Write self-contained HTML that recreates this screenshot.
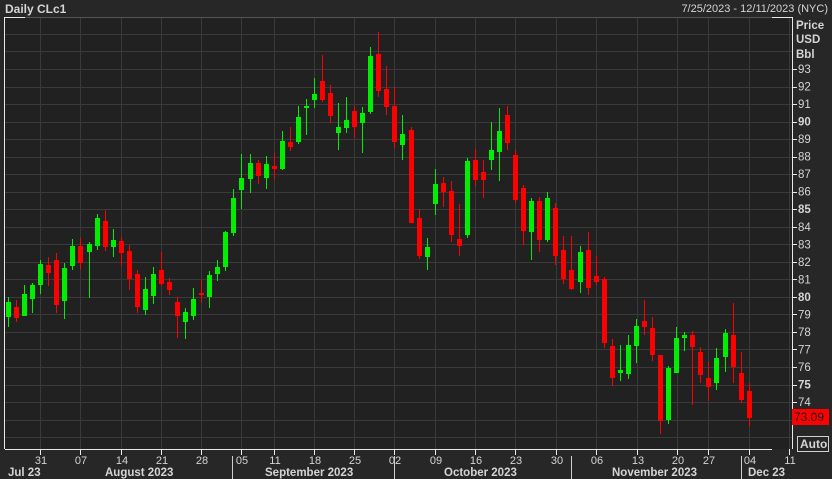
<!DOCTYPE html>
<html><head><meta charset="utf-8"><style>
html,body{margin:0;padding:0;background:#262626;width:832px;height:479px;overflow:hidden;font-family:"Liberation Sans",sans-serif}
svg{display:block}
</style></head><body>
<svg id="s" width="832" height="479" xmlns="http://www.w3.org/2000/svg" font-family="Liberation Sans, sans-serif">
<rect x="0" y="0" width="832" height="479" fill="#272727"/>
<rect x="5" y="17" width="787" height="432" fill="#212121"/>
<g id="grid" stroke="#3a3a3a" stroke-width="1"></g>
<g id="candles"></g>
<line x1="4.5" y1="17" x2="4.5" y2="449" stroke="#e8e8e8"/>
<line x1="4" y1="17.5" x2="25" y2="17.5" stroke="#e8e8e8"/>
<line x1="25" y1="17.5" x2="792" y2="17.5" stroke="#555"/>
<line x1="772" y1="17.5" x2="792" y2="17.5" stroke="#e8e8e8"/>
<line x1="792.5" y1="17" x2="792.5" y2="449" stroke="#e8e8e8"/>
<line x1="5" y1="449.5" x2="772" y2="449.5" stroke="#e8e8e8"/>
<g id="ticks" stroke="#e8e8e8"></g>
<g fill="#d4d4d4" font-size="11.5">
<text x="5" y="13" font-weight="bold" font-size="12">Daily CLc1</text>
<text x="828" y="12" text-anchor="end" font-size="11">7/25/2023 - 12/11/2023 (NYC)</text>
<text x="796" y="29" font-weight="bold">Price</text>
<text x="796" y="43" font-weight="bold">USD</text>
<text x="796" y="58" font-weight="bold">Bbl</text>
</g>
<g id="plabels" fill="#d4d4d4" font-size="11.5"></g>
<rect x="792" y="409" width="37" height="16" fill="#ff0000"/>
<text x="794" y="421" fill="#1a1a1a" font-size="12">73.09</text>
<rect x="797.5" y="436.5" width="31" height="15" fill="none" stroke="#cfcfcf"/>
<text x="800" y="448" fill="#d4d4d4" font-size="12" font-weight="bold">Auto</text>
<g id="dlabels" fill="#d4d4d4" font-size="11" text-anchor="middle"></g>
<g fill="#d4d4d4" font-size="11.5" font-weight="bold">
<text x="8" y="476">Jul 23</text>
<text x="105" y="476">August 2023</text>
<text x="265" y="476">September 2023</text>
<text x="444" y="476">October 2023</text>
<text x="612" y="476">November 2023</text>
<text x="748" y="476">Dec 23</text>
</g>
<g stroke="#cfcfcf"><line x1="232.5" y1="456" x2="232.5" y2="479"/><line x1="394.5" y1="456" x2="394.5" y2="479"/><line x1="571.5" y1="456" x2="571.5" y2="479"/><line x1="741.5" y1="456" x2="741.5" y2="479"/></g>
</svg>
<script>
var NS="http://www.w3.org/2000/svg";
function el(p,t,a,txt){var e=document.createElementNS(NS,t);for(var k in a)e.setAttribute(k,a[k]);if(txt)e.textContent=txt;document.getElementById(p).appendChild(e);}
function yp(p){return 69+(93-p)*17.53;}
for(var p=72;p<=96;p++){var y=Math.round(yp(p))+0.5;if(y>17&&y<449)el("grid","line",{x1:5,y1:y,x2:792,y2:y});}
var wx=[40,80,121,161,201,241,274,314,354,394,435,475,515,556,596,637,677,708,749,789];
var wl=["31","07","14","21","28","05","11","18","25","02","09","16","23","30","06","13","20","27","04","11"];
wx.forEach(function(x,i){if(x<790)el("grid","line",{x1:x+0.5,y1:17,x2:x+0.5,y2:449});el("ticks","line",{x1:x+0.5,y1:449,x2:x+0.5,y2:455});el("dlabels","text",{x:x+1,y:464},wl[i]);});
for(var p=74;p<=93;p++){var y=yp(p);el("ticks","line",{x1:792,y1:Math.round(y)+0.5,x2:797,y2:Math.round(y)+0.5});var a={x:798,y:y+4};if(p%5==0)a["font-weight"]="bold";el("plabels","text",a,String(p));}
var c=[
[8,"G",302,317,297,327],[16,"R",307,318,300,322],[24,"G",294,316,285,316],[32,"G",285,299,283,313],[40,"G",264,285,260,294],[48,"R",265,273,257,286],[56,"R",260,305,253,313],[64,"G",268,301,263,319],[72,"G",246,266,239,270],[80,"R",246,263,238,270],[89,"G",244,252,242,298],[97,"G",218,246,214,250],[105,"R",221,247,210,251],[113,"G",240,247,229,257],[121,"R",241,253,237,266],[129,"R",251,279,245,290],[137,"R",274,307,270,313],[145,"G",289,310,277,315],[153,"G",274,296,267,304],[161,"R",270,284,252,286],[169,"R",282,290,278,295],[177,"R",302,316,297,338],[185,"G",312,322,308,339],[193,"G",299,316,288,320],[201,"R",293,295,280,303],[209,"G",275,297,271,308],[217,"G",267,274,260,281],[225,"G",232,267,231,271],[233,"G",198,233,189,236],
[241,"G",178,190,154,209],[250,"G",163,179,154,193],[258,"R",163,176,160,184],[266,"G",164,178,156,189],[274,"R",166,169,153,179],[282,"G",141,169,131,170],[290,"R",142,147,127,151],[298,"G",117,142,106,144],[306,"G",106,108,99,135],[314,"G",94,100,78,108],[322,"R",81,100,55,102],[330,"R",93,116,85,123],[338,"G",127,133,103,150],[346,"G",120,128,97,133],[354,"R",111,127,106,138],[362,"G",113,123,107,153],[370,"G",56,112,47,114],[378,"R",54,91,32,97],[386,"R",89,107,66,115],[394,"R",106,142,87,148],[402,"G",134,145,115,160],[411,"R",130,223,127,223],
[419,"R",218,256,209,259],[427,"G",247,257,238,270],[435,"G",184,204,169,215],[443,"R",183,192,177,207],[451,"R",191,235,181,242],[459,"R",239,246,204,256],[467,"G",161,235,158,238],[475,"R",160,180,149,186],[483,"R",172,180,160,198],[491,"G",150,160,122,170],[499,"G",131,152,108,181],[507,"R",115,143,106,150],[515,"R",155,200,150,203],[523,"R",188,231,185,245],[531,"G",201,232,198,260],[539,"R",201,240,197,252],[547,"G",198,240,192,242],[555,"R",208,256,203,265],[563,"R",250,279,236,284],[571,"R",270,289,236,290],[580,"G",252,282,246,293],[588,"R",250,288,232,295],[596,"R",276,282,256,285],
[604,"R",279,343,277,348],[612,"R",346,378,339,386],[620,"G",370,373,345,381],[628,"G",345,374,335,379],[636,"G",326,346,319,363],[644,"R",321,327,300,335],[652,"R",328,355,317,361],[660,"R",355,421,355,434],[668,"G",368,420,366,424],[676,"G",338,373,327,373],[684,"G",335,338,332,351],[692,"R",335,347,331,405],[700,"R",352,375,347,383],[708,"R",378,387,362,401],[716,"G",358,383,348,390],[725,"G",333,357,329,372],[733,"R",335,367,303,383],[741,"R",373,400,352,403],[749,"R",391,418,383,426]];
c.forEach(function(d){var col=d[1]=="G"?"#00ee00":"#ff0000";el("candles","rect",{x:d[0],y:d[4],width:1,height:d[5]-d[4],fill:col});el("candles","rect",{x:d[0]-2,y:d[2],width:5,height:Math.max(2,d[3]-d[2]),fill:col});});
</script>
</body></html>
